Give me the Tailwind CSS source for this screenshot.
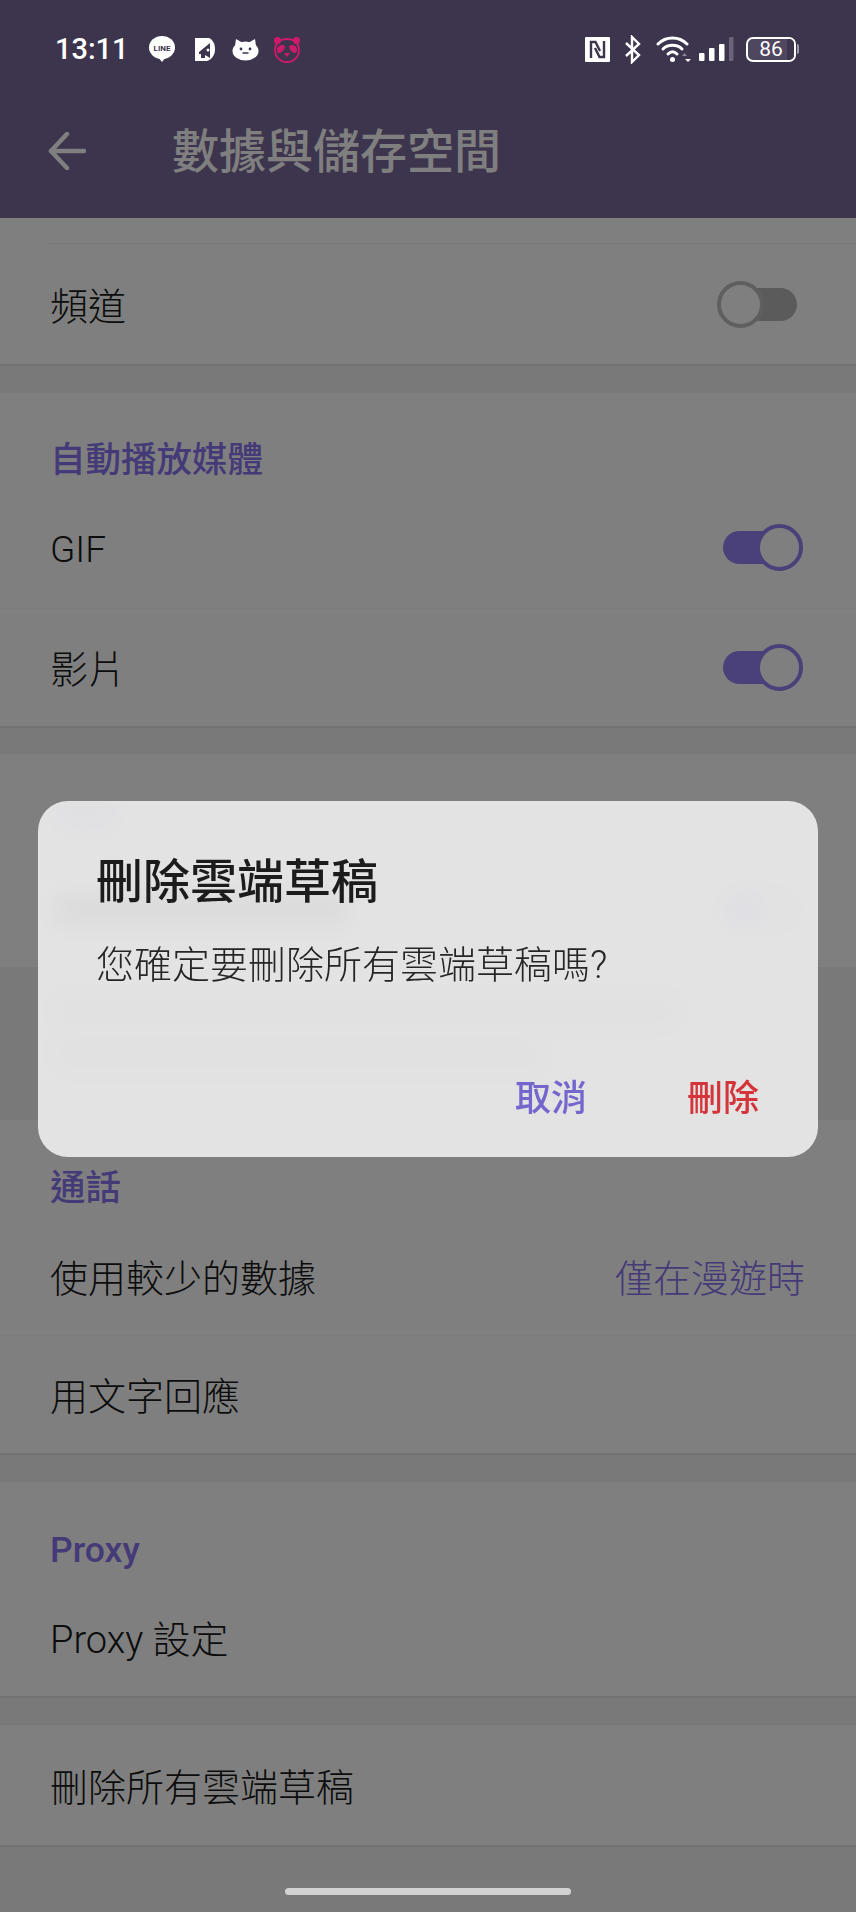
<!DOCTYPE html>
<html lang="zh-Hant">

<head>
    <meta charset="UTF-8">
    <meta name="viewport" content="width=device-width, initial-scale=1.0">
    <script src="https://cdn.jsdelivr.net/npm/@tailwindcss/browser@4"></script>
    <title>數據與儲存空間</title>
</head>

<body class="bg-[#f2f2f2] font-['Roboto','Noto_Sans_CJK_TC',sans-serif]">
    <div class="relative w-[856px] h-[1912px] overflow-hidden">

        <!-- settings page, dimmed by the overlay below -->
        <header class="flex items-center h-[218px] pt-[84px] pl-[48px] bg-[#7a689a]">
            <svg class="w-[38px] h-[38px] shrink-0" viewBox="0 0 38 38" fill="none" stroke="#ffffff" stroke-width="4.5"
                stroke-linecap="round" stroke-linejoin="round">
                <path d="M3 19H36" />
                <path d="M19 2L3 19L19 36" />
            </svg>
            <h1 class="ml-[86px] text-[47px] leading-none font-medium text-white">數據與儲存空間</h1>
        </header>

        <section class="bg-white border-b-2 border-[#e4e4e4]">
            <div class="h-[25px]"></div>
            <div class="ml-[48px] h-px bg-[#f0f0f0]"></div>
            <div class="flex items-center justify-between h-[120px] pl-[50px] pr-[59px]">
                <span class="mt-[6px] text-[38px] font-light text-[#181818]">頻道</span>
                <div class="relative w-[74px] h-[33px] rounded-full bg-[#b6b6b6]">
                    <div class="absolute -left-[6px] -top-[7px] w-[47px] h-[47px] rounded-full bg-white border-[4px] border-[#bebebe]"></div>
                </div>
            </div>
        </section>

        <div class="h-[27px]"></div>

        <section class="bg-white border-b-2 border-[#e4e4e4]">
            <h2 class="h-[98px] pt-[49px] pl-[50px] text-[35.5px] leading-9 font-medium text-[#8a74f0]">自動播放媒體</h2>
            <div class="flex items-center justify-between h-[118px] pl-[50px] pr-[59px] border-b border-[#f9f9f9]">
                <span class="text-[37px] font-light text-[#181818]">GIF</span>
                <div class="relative -mt-[4px] w-[74px] h-[33px] rounded-full bg-[#9480f4]">
                    <div class="absolute -right-[6px] -top-[7px] w-[47px] h-[47px] rounded-full bg-white border-[4px] border-[#9480f4]"></div>
                </div>
            </div>
            <div class="flex items-center justify-between h-[117px] pl-[50px] pr-[59px]">
                <span class="mt-[6px] text-[38px] font-light text-[#181818]">影片</span>
                <div class="relative w-[74px] h-[33px] rounded-full bg-[#9480f4]">
                    <div class="absolute -right-[6px] -top-[7px] w-[47px] h-[47px] rounded-full bg-white border-[4px] border-[#9480f4]"></div>
                </div>
            </div>
        </section>

        <div class="h-[26px]"></div>

        <!-- this block is only seen blurred through the dialog, so plain bars stand in for its text -->
        <section class="bg-white">
            <div class="h-[98px] pt-[52px] pl-[57px]">
                <div class="w-[60px] h-[24px] bg-[#b5a8f0]"></div>
            </div>
            <div class="flex items-center justify-between h-[115px] pl-[55px] pr-[59px]">
                <div class="w-[293px] h-[32px] bg-[#555555]"></div>
                <div class="relative w-[74px] h-[33px] rounded-full bg-[#9480f4]">
                    <div class="absolute -right-[6px] -top-[7px] w-[47px] h-[47px] rounded-full bg-white border-[4px] border-[#9480f4]"></div>
                </div>
            </div>
        </section>
        <div class="h-[153px] pt-[32px] pl-[57px]">
            <div class="w-[618px] h-[23px] bg-[#bbbbbb]"></div>
            <div class="mt-[20px] w-[483px] h-[25px] bg-[#bbbbbb]"></div>
        </div>

        <section class="bg-white border-b-2 border-[#e4e4e4]">
            <h2 class="h-[98px] pt-[50px] pl-[50px] text-[35.5px] leading-9 font-medium text-[#8a74f0]">通話</h2>
            <div class="flex items-center justify-between h-[118px] pl-[50px] pr-[51px] border-b border-[#f9f9f9]">
                <span class="mt-[6px] text-[38px] font-light text-[#181818]">使用較少的數據</span>
                <span class="mt-[6px] text-[38px] font-light text-[#8a74f0]">僅在漫遊時</span>
            </div>
            <div class="flex items-center h-[117px] pl-[50px]">
                <span class="mt-[6px] text-[38px] font-light text-[#181818]">用文字回應</span>
            </div>
        </section>

        <div class="h-[27px]"></div>

        <section class="bg-white border-b-2 border-[#e4e4e4]">
            <h2 class="h-[98px] pt-[50px] pl-[50px] text-[35.5px] leading-9 font-medium text-[#8a74f0]">Proxy</h2>
            <div class="flex items-center h-[116px] pl-[50px]">
                <span class="mt-[5px] text-[38px] font-light text-[#181818]">Proxy 設定</span>
            </div>
        </section>

        <div class="h-[27px]"></div>

        <section class="bg-white border-b-2 border-[#e4e4e4]">
            <div class="flex items-center h-[120px] pl-[50px]">
                <span class="mt-[6px] text-[38px] font-light text-[#181818]">刪除所有雲端草稿</span>
            </div>
        </section>

        <!-- modal overlay -->
        <div class="absolute inset-0 z-10 bg-black/50"></div>

        <!-- dialog -->
        <div class="absolute z-20 left-[38px] top-[801px] w-[780px] h-[356px] pl-[58px] pr-[59px] pt-[53px] rounded-[30px] bg-[#eeeeee]/90 backdrop-blur-md">
            <h3 class="text-[47px] leading-[56px] font-medium text-[#1c1c1c]">刪除雲端草稿</h3>
            <p class="mt-[30px] text-[38px] leading-[50px] font-light text-[#262626]">您確定要刪除所有雲端草稿嗎?</p>
            <div class="flex justify-end gap-[100px] mt-[87px]">
                <button class="text-[36px] leading-[44px] font-medium text-[#7466cc]">取消</button>
                <button class="text-[36px] leading-[44px] font-medium text-[#d4353b]">刪除</button>
            </div>
        </div>

        <!-- system status bar stays bright above the overlay -->
        <div class="absolute z-30 top-0 left-0 w-full h-[98px] flex items-center pl-[55px] pr-[57px] text-white">
            <span class="text-[29px] leading-none font-medium w-[93px]">13:11</span>

            <svg class="w-[28px] h-[28px]" viewBox="0 0 28 28">
                <ellipse cx="14" cy="12.5" rx="13" ry="11.5" fill="#fff" />
                <path d="M10 22L14 27L18 22Z" fill="#fff" />
                <text x="14" y="15.5" text-anchor="middle" font-size="8" font-weight="700" fill="#3d344d" font-family="Roboto">LINE</text>
            </svg>

            <svg class="w-[22px] h-[25px] ml-[18px]" viewBox="0 0 22 25">
                <path d="M1 1H15C19 3 21 7 21 12C21 18 18 22 13 24H1Z" fill="#fff" />
                <path d="M5 15L16 6V21L11 18V21H7V17L5 17Z" fill="#3d344d" />
                <circle cx="14" cy="13" r="1.500" fill="#fff" />
            </svg>

            <svg class="w-[27px] h-[23px] ml-[16px]" viewBox="0 0 27 23">
                <ellipse cx="13.500" cy="13" rx="13" ry="9.500" fill="#fff" />
                <path d="M3 8L4 1L11 5Z" fill="#fff" />
                <path d="M24 8L23 1L16 5Z" fill="#fff" />
                <circle cx="9" cy="11" r="1.400" fill="#3d344d" />
                <circle cx="18" cy="11" r="1.400" fill="#3d344d" />
                <path d="M10.500 15H16.500" stroke="#3d344d" stroke-width="1.500" />
            </svg>

            <svg class="w-[28px] h-[27px] ml-[14px]" viewBox="0 0 28 27" fill="#cf1a6b">
                <circle cx="4.500" cy="4.500" r="3.500" />
                <circle cx="23.500" cy="4.500" r="3.500" />
                <path d="M14 3C22 3 26 8 26 14C26 21 21 26 14 26C7 26 2 21 2 14C2 8 6 3 14 3Z" fill="none" stroke="#cf1a6b" stroke-width="1.800" />
                <path d="M4 13C5 9 9 8 12 10C12 13 9 17 6 17C4 17 4 15 4 13Z" />
                <path d="M24 13C23 9 19 8 16 10C16 13 19 17 22 17C24 17 24 15 24 13Z" />
                <path d="M11 17H17L14 21Z" />
            </svg>

            <div class="ml-auto flex items-center">
                <svg class="w-[25px] h-[25px]" viewBox="0 0 25 25">
                    <rect width="25" height="25" rx="1" fill="#fff" />
                    <path d="M6 21V5H10.500L15 14" fill="none" stroke="#3d344d" stroke-width="2.400" />
                    <path d="M19 4V20H14.500L10 11" fill="none" stroke="#3d344d" stroke-width="2.400" />
                </svg>

                <svg class="w-[16px] h-[29px] ml-[15px]" viewBox="0 0 16 29" fill="none" stroke="#fff" stroke-width="2.400">
                    <path d="M1 8L14 20L7 27V2L14 9L1 21" />
                </svg>

                <svg class="w-[35px] h-[28px] ml-[15px]" viewBox="0 0 35 28" fill="none" stroke="#fff" stroke-width="3" stroke-linecap="round">
                    <path d="M2 9C10 1 23 1 31 9" />
                    <path d="M7 14C12 9 21 9 26 14" />
                    <path d="M12 19C15 16 18 16 21 19" />
                    <circle cx="16.500" cy="24.500" r="2.500" fill="#fff" stroke="none" />
                    <path d="M26 21L28.500 18L31 21Z" fill="#8a8494" stroke="none" />
                    <path d="M29 24H35L32 27Z" fill="#fff" stroke="none" />
                </svg>

                <svg class="w-[36px] h-[26px] ml-[7px]" viewBox="0 0 36 26" fill="#fff">
                    <rect x="1" y="17" width="5.500" height="8" rx="1" />
                    <rect x="11" y="12" width="5.500" height="13" rx="1" />
                    <rect x="21" y="8" width="5.500" height="17" rx="1" />
                    <rect x="31" y="1" width="4.500" height="24" rx="1" fill="#6b6378" />
                </svg>

                <div class="relative ml-[12px] w-[50px] h-[25px] rounded-[7px] border-2 border-white overflow-hidden bg-[#4f465f] flex items-center justify-center">
                    <div class="absolute right-0 top-0 bottom-0 w-[7px] bg-[#3d344d]"></div>
                    <span class="relative text-[21px] leading-none text-white">86</span>
                </div>
                <div class="ml-[1px] w-[2px] h-[10px] rounded-r-sm bg-[#9d98a6]"></div>
            </div>
        </div>

        <!-- gesture pill -->
        <div class="absolute z-30 left-[285px] top-[1888px] w-[286px] h-[7px] rounded-full bg-[#d2d2d2]"></div>
    </div>
</body>

</html>
